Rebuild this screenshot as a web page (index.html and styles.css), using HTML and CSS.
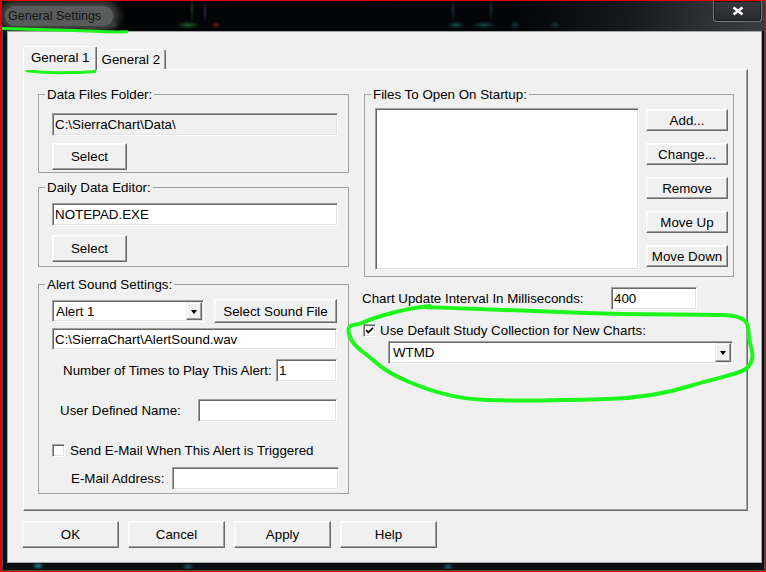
FILE: index.html
```html
<!DOCTYPE html>
<html>
<head>
<meta charset="utf-8" />
<title>General Settings</title>
<link rel="stylesheet" href="styles.css">
</head>
<body>
<div class="screen">
<div class="window">
	<div class="titlebar">
		<span class="title">General Settings</span>
		<span class="close">
			<svg width="12" height="10" viewBox="0 0 12 10">
				<path d="M1.5 1.5 L10.5 8.5 M10.5 1.5 L1.5 8.5" stroke="#3a3a3a" stroke-width="4" fill="none"/>
				<path d="M1.5 1.5 L10.5 8.5 M10.5 1.5 L1.5 8.5" stroke="#fff" stroke-width="2.4" fill="none"/>
			</svg>
		</span>
	</div>

	<div class="client">
		<div class="tabs">
			<div class="tab active">General 1</div>
			<div class="tab">General 2</div>
		</div>

		<div class="panel">
			<div class="col left">
				<fieldset class="group data">
					<legend>Data Files Folder:</legend>
					<input class="field sunk off" type="text" value="C:\SierraChart\Data\" readonly>
					<button class="btn select">Select</button>
				</fieldset>

				<fieldset class="group editor">
					<legend>Daily Data Editor:</legend>
					<input class="field sunk" type="text" value="NOTEPAD.EXE">
					<button class="btn select">Select</button>
				</fieldset>

				<fieldset class="group alert">
					<legend>Alert Sound Settings:</legend>
					<div class="row first">
						<div class="combo sunk alert-list"><span>Alert 1</span><span class="drop"></span></div>
						<button class="btn sound">Select Sound File</button>
					</div>
					<input class="field sunk path" type="text" value="C:\SierraChart\AlertSound.wav">
					<div class="row times">
						<label>Number of Times to Play This Alert:</label>
						<input class="field sunk count" type="text" value="1">
					</div>
					<div class="row named">
						<label>User Defined Name:</label>
						<input class="field sunk name" type="text" value="">
					</div>
					<div class="row mail">
						<span class="check sunk"></span>
						<label>Send E-Mail When This Alert is Triggered</label>
					</div>
					<div class="row address">
						<label>E-Mail Address:</label>
						<input class="field sunk email" type="text" value="">
					</div>
				</fieldset>
			</div>

			<div class="col right">
				<fieldset class="group files">
					<legend>Files To Open On Startup:</legend>
					<div class="files-body">
						<div class="listbox sunk"></div>
						<div class="stack">
							<button class="btn side">Add...</button>
							<button class="btn side">Change...</button>
							<button class="btn side">Remove</button>
							<button class="btn side">Move Up</button>
							<button class="btn side">Move Down</button>
						</div>
					</div>
				</fieldset>

				<div class="row interval">
					<label>Chart Update Interval In Milliseconds:</label>
					<input class="field sunk ms" type="text" value="400">
				</div>
				<div class="row usedefault">
					<span class="check sunk">
						<svg width="9" height="9" viewBox="0 0 9 9"><polyline points="1,4 3.3,6.4 8,1.8" stroke="#000" stroke-width="1.8" fill="none"/></svg>
					</span>
					<label>Use Default Study Collection for New Charts:</label>
				</div>
				<div class="combo sunk study"><span>WTMD</span><span class="drop"></span></div>
			</div>
		</div>

		<div class="actions">
			<button class="btn act">OK</button>
			<button class="btn act">Cancel</button>
			<button class="btn act">Apply</button>
			<button class="btn act">Help</button>
		</div>
	</div>
</div>

<!-- green marker drawn over the screenshot -->
<svg class="marks" width="766" height="572" viewBox="0 0 766 572">
	<path d="M2 28.5 C 30 29.2, 55 29.8, 75 30.6 S 110 32.4, 127 31.8" />
	<path d="M27 70.8 C 40 72.6, 55 73, 70 72.6 S 88 71.8, 95 71.6" />
	<path class="loop" d="M423 307 C 480 309, 540 311, 587 313 S 690 314, 723 315 S 746 330, 750 343 S 753 362, 747 368 S 712 379, 690 386 S 640 398, 607 399 S 520 401, 487 400 S 425 389, 407 381 S 382 368, 373 360 S 352 346, 349 334 S 356 326, 362 323 S 398 309, 430 306" />
</svg>
</div>
</body>
</html>
```

FILE: styles.css
```css
body {
	margin: 0;
	font-family: "Liberation Sans", Arial, sans-serif;
	font-size: 13.33px;
	line-height: 15px;
	color: #000;
}

.screen {
	position: relative;
	width: 766px;
	height: 572px;
	box-sizing: border-box;
	border: 1px solid #e40000;
	border-left-width: 2px;
	overflow: hidden;
	background: #0b0d10;
}

.window {
	display: flex;
	flex-direction: column;
	height: 100%;
	box-sizing: border-box;
	padding-bottom: 8px;
	background:
		radial-gradient(ellipse 6px 4px at 36px 565px, rgba(40, 170, 190, .7), transparent),
		radial-gradient(ellipse 6px 4px at 186px 566px, rgba(40, 170, 190, .5), transparent),
		radial-gradient(ellipse 6px 4px at 446px 566px, rgba(40, 170, 190, .5), transparent),
		#0c0e11;
	box-shadow: inset 0 0 0 1px #4a4c4f, inset 0 0 0 2px #060708;
}

/* title bar */
.titlebar {
	height: 30px;
	display: flex;
	align-items: center;
	background:
		radial-gradient(ellipse 12px 4px at 186px 24px, rgba(50, 160, 60, .55), transparent),
		radial-gradient(ellipse 2px 14px at 190px 8px, rgba(50, 160, 60, .35), transparent),
		radial-gradient(ellipse 2px 14px at 203px 10px, rgba(110, 60, 140, .45), transparent),
		radial-gradient(ellipse 5px 4px at 214px 24px, rgba(170, 40, 40, .6), transparent),
		radial-gradient(ellipse 4px 3px at 112px 24px, rgba(50, 140, 60, .35), transparent),
		radial-gradient(ellipse 9px 4px at 454px 24px, rgba(30, 130, 140, .55), transparent),
		radial-gradient(ellipse 12px 4px at 482px 24px, rgba(30, 130, 140, .5), transparent),
		radial-gradient(ellipse 2px 14px at 451px 8px, rgba(30, 130, 140, .35), transparent),
		radial-gradient(ellipse 2px 14px at 489px 8px, rgba(30, 130, 140, .35), transparent),
		radial-gradient(ellipse 5px 4px at 513px 24px, rgba(30, 130, 140, .45), transparent),
		radial-gradient(ellipse 5px 4px at 553px 24px, rgba(30, 130, 140, .4), transparent),
		linear-gradient(100deg, #020304 0%, #040508 68%, #17191c 82%, #2e3033 92%, #3c3d40 100%);
}

.title {
	margin-left: 3px;
	padding: 3px 12px 3px 3px;
	color: #141414;
	font-size: 12.5px;
	line-height: 14px;
	background: rgba(150, 150, 150, .6);
	border-radius: 9px;
	box-shadow: 0 0 10px 5px rgba(150, 150, 150, .5);
}

.close {
	margin-left: auto;
	margin-right: 3px;
	align-self: flex-start;
	width: 49px;
	height: 21px;
	box-sizing: border-box;
	display: flex;
	align-items: center;
	justify-content: center;
	border: 1px solid #76787b;
	border-top: 0;
	border-radius: 0 0 4px 4px;
	background: linear-gradient(#36383b, #27292c);
	box-shadow: inset 0 0 0 1px #1b1c1e;
}

/* client area */
.client {
	flex: 1;
	margin: 0 3px 0 5px;
	padding: 14px 0 0 15px;
	background: #f0f0f0;
	border: 1px solid #a6a6a6;
}

.tabs {
	display: flex;
	align-items: flex-end;
	height: 23px;
	position: relative;
	z-index: 1;
}

.tab {
	height: 20px;
	box-sizing: border-box;
	padding: 2px 5px 0 4px;
	border: 1px solid;
	border-color: #fff #696969 transparent #fff;
	border-bottom: 0;
	border-radius: 2px 2px 0 0;
	box-shadow: inset -1px 0 0 #a0a0a0;
	background: #f0f0f0;
}

.tab.active {
	height: 24px;
	margin-bottom: -1px;
	padding: 3px 6px 0 7px;
}

.panel {
	width: 725px;
	height: 442px;
	box-sizing: border-box;
	display: flex;
	align-items: flex-start;
	gap: 15px;
	padding: 17px 0 0 14px;
	border: 1px solid;
	border-color: #fff #696969 #696969 #fff;
	box-shadow: inset -1px -1px 0 #a0a0a0;
}

.col.left { width: 311px; }
.col.right { width: 370px; }

/* group boxes */
.group {
	margin: 0;
	min-width: 0;
	border: 1px solid #a0a0a0;
}

.group legend {
	padding: 0 2px;
	margin-left: -7px;
	line-height: 15px;
}

.group.data   { padding: 11px 10px 2px 13px; }
.group.editor { padding: 8px 10px 4px 13px; margin-top: 7px; }
.group.alert  { padding: 7px 11px 3px 13px; margin-top: 10px; }
.group.files  { padding: 6px 5px 6px 10px; }
.group.files legend { margin-left: -4px; }

/* 3d borders */
.btn {
	display: block;
	box-sizing: border-box;
	margin: 0;
	padding: 0;
	font: inherit;
	color: #000;
	background: #f0f0f0;
	border: 1px solid;
	border-color: #fff #696969 #696969 #fff;
	box-shadow: inset -1px -1px 0 #a0a0a0, inset 1px 1px 0 #f8f8f8;
}

.sunk {
	border: 1px solid;
	border-color: #a0a0a0 #fff #fff #a0a0a0;
	box-shadow: inset 1px 1px 0 #696969, inset -1px -1px 0 #e3e3e3;
	background: #fff;
}

.field {
	display: block;
	width: 100%;
	height: 23px;
	box-sizing: border-box;
	margin: 0;
	padding: 0 2px;
	font: inherit;
	color: #000;
	outline: none;
}

.field.off { background: #f0f0f0; }

.btn.select { width: 75px; height: 27px; }
.data .btn.select { margin-top: 7px; }
.editor .btn.select { margin-top: 9px; }

/* combo boxes */
.combo {
	display: flex;
	align-items: stretch;
	box-sizing: border-box;
	padding: 1px 1px 1px 3px;
}

.combo span:first-child {
	flex: 1;
	align-self: center;
}

.drop {
	width: 16px;
	box-sizing: border-box;
	display: flex;
	align-items: center;
	justify-content: center;
	background: #f0f0f0;
	border: 1px solid;
	border-color: #f0f0f0 #696969 #696969 #f0f0f0;
	box-shadow: inset -1px -1px 0 #a0a0a0, inset 1px 1px 0 #fff;
}

.drop::after {
	content: "";
	width: 0;
	height: 0;
	margin-top: 1px;
	border-left: 3.5px solid transparent;
	border-right: 3.5px solid transparent;
	border-top: 4px solid #000;
}

/* alert rows */
.row {
	display: flex;
	align-items: center;
}

.row.first { height: 24px; gap: 10px; }
.alert-list { width: 152px; height: 22px; }
.btn.sound { width: 123px; height: 24px; }

.path { height: 22px; margin-top: 5px; }

.row.times { margin-top: 9px; padding-left: 11px; }
.count { width: 61px; margin-left: auto; }

.row.named { margin-top: 17px; padding-left: 8px; }
.name { width: 139px; margin-left: auto; }

.row.mail { margin-top: 21px; height: 15px; }
.row.mail label { margin-left: 5px; }

.row.address { margin: 9px -2px 0 0; padding-left: 19px; }
.email { width: 167px; margin-left: auto; }

.check {
	width: 13px;
	height: 13px;
	box-sizing: border-box;
	display: flex;
	align-items: center;
	justify-content: center;
	flex: none;
}

/* files to open */
.files-body {
	display: flex;
	gap: 7px;
}

.listbox {
	width: 264px;
	height: 162px;
	box-sizing: border-box;
}

.stack {
	display: flex;
	flex-direction: column;
	gap: 12px;
	margin-top: 1px;
}

.btn.side { width: 82px; height: 22px; }

.row.interval { margin: 10px 37px 0 -2px; }
.row.interval label { flex: 1; }
.ms { width: 86px; }

.row.usedefault { height: 15px; margin: 13px 0 0 -1px; }
.row.usedefault label { margin-left: 4px; }

.combo.study {
	height: 23px;
	margin: 3px 1px 0 24px;
	padding-left: 4px;
}

/* dialog buttons */
.actions {
	display: flex;
	gap: 9px;
	margin: 10px 0 0 -1px;
}

.btn.act { width: 97px; height: 27px; }

/* hand drawn marker */
.marks {
	position: absolute;
	left: -2px;
	top: -1px;
	pointer-events: none;
}

.marks path {
	fill: none;
	stroke: #1cf81c;
	stroke-width: 3;
	stroke-linecap: round;
	stroke-linejoin: round;
}

.marks path.loop { stroke-width: 4; }
```
